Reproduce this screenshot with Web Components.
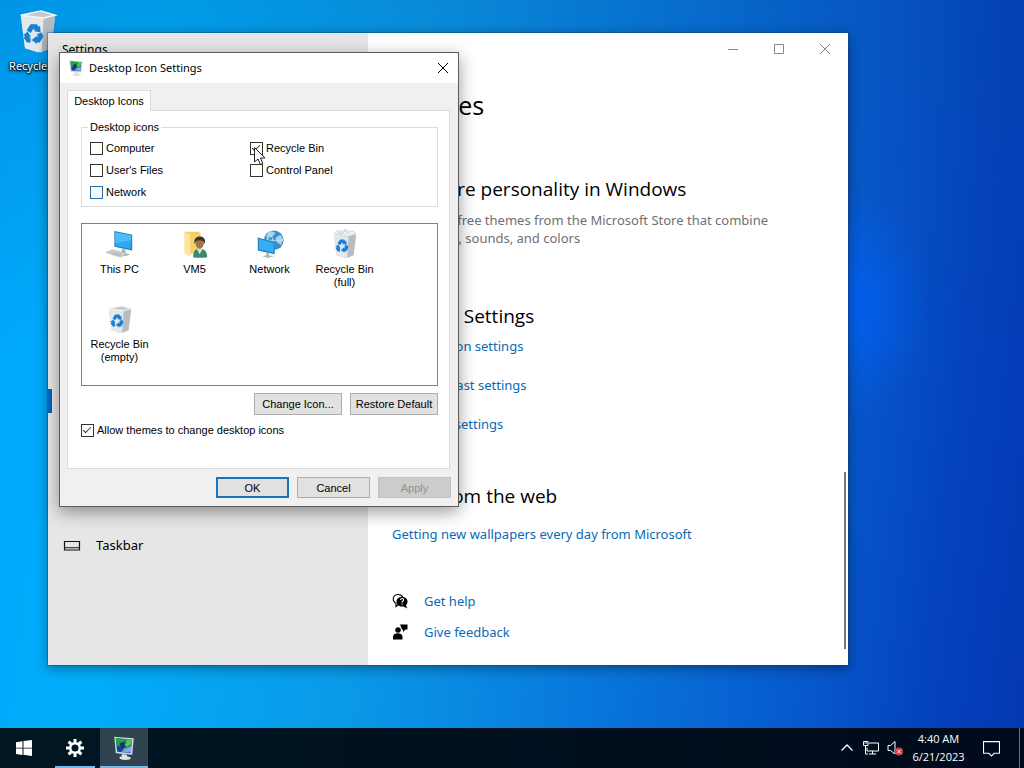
<!DOCTYPE html>
<html lang="en">
<head>
<meta charset="utf-8">
<title>Desktop</title>
<style>
  html, body { margin: 0; height: 100%; }
  body { font: 13px/20px "Noto Sans", "Open Sans", sans-serif; color: #000; overflow: hidden; }
  settings-window { position: absolute; left: 48px; top: 33px; }
  icon-dialog { position: absolute; left: 59px; top: 52px; }
  mouse-pointer { position: absolute; left: 253px; top: 146px; }
</style>
</head>
<body>
<desk-top>
  <desktop-shortcut>Recycle Bin</desktop-shortcut>
  <settings-window></settings-window>
  <icon-dialog></icon-dialog>
  <mouse-pointer></mouse-pointer>
  <task-bar slot="taskbar"></task-bar>
</desk-top>

<script>
const define = (name, html, setup) => {
  const template = document.createElement('template');
  template.innerHTML = html;
  customElements.define(name, class extends HTMLElement {
    constructor() {
      super();
      this.attachShadow({ mode: 'open' }).append(template.content.cloneNode(true));
    }
    connectedCallback() { if (setup) setup(this, this.shadowRoot); }
  });
};

/* ---------- pictures ---------- */
const recycle = `<g fill="none" stroke="#1a7fd0" stroke-width="3.4">
  <path d="M9.500 16.500l2.200-3.500h2.600l1.200 2M16.800 17.500l1 2.200-1.500 2.600h-2M10.800 22.300H9.200L7.400 19.500"/></g>
  <path d="M13.200 16.200l4.600.6-.4-4.600zM15.200 19.300v5.800l-3.600-2.800zM5.400 19.200l3.400-2.600 2.400 3.600z" fill="#1a7fd0"/>`;
const bin = full => `<path d="M4 5l14-3 10 3-3 23-9 3-9-3z" fill="#d9dee1"/>
  <path d="M4 5l16 2-1.600 24L7 28z" fill="#e3e8ec"/><path d="M20 7l8-2-3 23-6.600 3z" fill="#b5bdc2"/>
  <path d="M4 5l14-3 10 3-8 2z" fill="#c3cbcf" stroke="#f4f7f8" stroke-width="1"/>
  ${full ? '<path d="M5 5l3-4 4 2 5-3 4 3 4-1 2 3-7 3z" fill="#eef1f2" stroke="#b9c1c5" stroke-width=".6"/><path d="M9 4l4 1 3-3 4 3" fill="none" stroke="#aab3b8" stroke-width=".7"/>' : ''}${recycle}`;
const monitorBlue = `<path d="M10 2l19 4v17l-19-4z" fill="#1878bd"/><path d="M11 3.400l17 3.500v14.700l-17-3.500z" fill="#2fa8f2"/>
  <path d="M11 3.400l17 3.500v5l-17 3z" fill="#4fbcfa"/>`;
const pictures = {
  'bin-empty': bin(false),
  'bin-full': bin(true),
  pc: `${monitorBlue}<path d="M18 21l4 1v4l5 1-5 2-7-2 3-2z" fill="#aeb6bb"/>
    <path d="M1 25l7-3 15 4-6 4z" fill="#d7dadc" stroke="#a5abaf" stroke-width=".6"/><path d="M4 25l13 3.500M6 24l13 3.500M8 28l6-4M12 29l6-3.500" stroke="#9da3a7" stroke-width=".6"/>`,
  user: `<path d="M5 3h15l2 2v20l-12 2-5-2z" fill="#f5cf69"/><path d="M5 3l6 3v24l-6-4z" fill="#ffe59a"/>
    <path d="M14 30c0-6 2-9 7-9s8 3 8 9c-5 1-11 1-15 0z" fill="#3b8a6b"/><path d="M18 21l3 6 3-6z" fill="#d5e9df"/>
    <ellipse cx="21" cy="15" rx="4.500" ry="6" fill="#a8714c"/><path d="M15.500 16c-1-6 2-8 6-8s6 3 5 8c-1-3-3-4-5-4s-5 0-6 4z" fill="#3a332e"/>`,
  network: `<circle cx="20" cy="12" r="10.500" fill="#3c8fc4"/><path d="M12 6l5-4 5 2-3 4-4 1-2 5zM22 9l5-3 3 5-2 6-5-3z" fill="#9fd3ee"/>
    <path d="M14 3q8 8 6 19M10 12h20" stroke="#d2ecf8" stroke-width=".8" fill="none"/>
    <path d="M3 9l18 5v13L3 23z" fill="#1878bd"/><path d="M4 10.500l16 4.300v10.700L4 21.800z" fill="#38acf4"/>
    <path d="M12 25l3 1v2l5 1-6 2-6-2 4-1z" fill="#adb6bb"/>`,
  display: `<path d="M3 1l26 2-2 22-22-2z" fill="#cdd6df"/><path d="M5 3l21.500 1.500-1.500 18L7 21z" fill="#1c3f9c"/>
    <path d="M5 3l15 1-4 7-10 3z" fill="#23a442"/><path d="M20 4l6.500.5-.5 6L14 20z" fill="#4ac84f"/><path d="M12 20.500l14-8-.9 9.500z" fill="#86a9ec"/>
    <path d="M10 10l8-3-3 5 5 2-6 3z" fill="#172f78"/><path d="M13 24l7 1v2c8 1 6 5-2 5s-11-4-5-5z" fill="#dfe3e7"/>`,
  taskbar: `<path d="M1 7h30v17H1zM1 19.500h30" fill="none" stroke="#111" stroke-width="2.400"/>`,
  help: `<path d="M13 23l-5 4v-6C-2 14 3 3 12 3c5 0 8 2 10 6" fill="none" stroke="#000" stroke-width="2.200"/>
    <path d="M20 8c7 0 11 4 11 9 0 3-1 5-3 7l2 7-7-4c-9 1-14-4-14-10 0-5 4-9 11-9z"/>
    <path d="M17 14c0-4 7-4 6 0 0 2-3 2-3 5M20 21v2.500" fill="none" stroke="#fff" stroke-width="2.200"/>`,
  feedback: `<circle cx="12" cy="12" r="5.500"/><path d="M2 31V25c0-9 19-9 19 0v6z"/><path d="M16 1h15v10h-4l-5 5v-5h-2z"/>`,
  start: `<path d="M0 4.500l13-2v13H0zM15 2.200L32 0v15.500H15zM0 17h13v13L0 28zM15 17h17v15l-17-2.300z" fill="#fff"/>`,
  gear: `<g fill="none" stroke="#fff"><circle cx="16" cy="16" r="8.500" stroke-width="4.500"/>
    <path d="M16 0v7M16 25v7M0 16h7M25 16h7M4.700 4.700l5 5M22.300 22.300l5 5M4.700 27.300l5-5M22.300 9.700l5-5" stroke-width="5.500"/></g>`,
  chevron: `<path d="M5 21L16 10l11 11" fill="none" stroke="#fff" stroke-width="2.500"/>`,
  net: `<g fill="none" stroke="#fff" stroke-width="2"><path d="M11 6h20v16H8V15M19 22v6M12 28h14M1 3h9v8H1zM5 11v17h5"/><path d="M3 6h5" /></g>`,
  volume: `<path d="M2 11h5l9-8v25l-9-7H2z" fill="none" stroke="#fff" stroke-width="2"/>
    <circle cx="24" cy="23" r="8" fill="#d9393f"/><path d="M20.500 19.500l7 7M27.500 19.500l-7 7" stroke="#fff" stroke-width="2"/>`,
  note: `<path d="M1 3h30v22h-10l-5 5-5-5H1z" fill="none" stroke="#fff" stroke-width="2"/>`,
  min: `<path d="M6 17h20" stroke="#888" stroke-width="2" fill="none"/>`,
  max: `<path d="M7 7h18v18H7z" stroke="#888" stroke-width="2" fill="none"/>`,
  close: `<path d="M6 6l20 20M26 6L6 26" stroke="currentColor" stroke-width="2" fill="none"/>`
};
define('sys-icon', `<style>
  :host { display: block; flex: none; width: var(--size, 16px); height: var(--size, 16px); }
  svg { display: block; width: 100%; height: 100%; overflow: visible; }
</style><svg viewBox="0 0 32 32" aria-hidden="true"></svg>`,
(host, root) => { root.querySelector('svg').innerHTML = pictures[host.getAttribute('name')]; });

/* ---------- desktop ---------- */
define('desk-top', `<style>
  :host { display: grid; grid-template-rows: 1fr auto; min-height: 100vh; position: relative;
    background:
      radial-gradient(ellipse 80px 110px at 850px 305px, rgba(0,100,255,.7), transparent),
      linear-gradient(180deg, rgba(0,60,130,.16), transparent 45%),
      linear-gradient(97deg, #00a6fa 0%, #00aefb 14%, #0a9ae8 38%, #0878dc 60%, #0758cc 80%, #0444bd 90%, #0337b2 100%); }
  main { padding: 8px 0; }
</style><main><slot></slot></main><slot name="taskbar"></slot>`);

define('desktop-shortcut', `<style>
  :host { display: block; width: 76px; }
  a { display: flex; flex-direction: column; align-items: center; gap: 4px; color: #fff; text-decoration: none;
    font-size: 11px; line-height: 16px; text-shadow: 0 1px 2px #000, 0 0 2px #000, 0 1px 3px #000; }
  sys-icon { --size: 46px; }
</style><a href="#"><sys-icon name="bin-empty"></sys-icon><span><slot></slot></span></a>`);

define('mouse-pointer', `<style>
  :host { display: block; width: 14px; height: 20px; pointer-events: none; }
  svg { display: block; }
</style><svg width="14" height="20" viewBox="0 0 14 20" aria-hidden="true">
  <path d="M1.500 1.500v14.500l3.500-3 2.500 5.500 2.300-1-2.300-5.500h4.500z" fill="#fff" stroke="#222" stroke-width="1"/></svg>`);

/* ---------- settings window ---------- */
define('text-link', `<style>
  :host { display: block; line-height: 20px; }
  a { display: flex; width: fit-content; align-items: center; gap: 16px; color: #0a6ab6; text-decoration: none; white-space: nowrap; }
  ::slotted(sys-icon) { color: #000; }
</style><a href="#"><slot name="icon"></slot><span><slot></slot></span></a>`);

define('settings-window', `<style>
  :host { display: grid; grid-template-columns: 2fr 3fr; width: 800px; background: #fff;
    box-shadow: 0 0 0 1px rgba(20,60,100,.35), 0 3px 12px rgba(0,0,0,.4); }
  aside { background: #e6e6e6; }
  .title { padding: 7px 14px; font-size: 12px; line-height: 20px; }
  nav { padding-top: 322px; display: flex; flex-direction: column; gap: 120px; }
  nav a { display: flex; align-items: center; gap: 16px; color: #000; text-decoration: none; line-height: 25px; padding-left: 16px; }
  nav .current { height: 24px; padding-left: 0; border-left: 4px solid #0067c0; }
  section { position: relative; }
  .bar { display: flex; justify-content: flex-end; }
  .bar button { width: 46px; height: 32px; border: 0; padding: 0; background: none; display: grid; place-items: center; color: #888; }
  .content { padding: 24px 24px 23px; }
  h1, h2, p { margin: 0; font-weight: 400; white-space: nowrap; }
  h1, h2 { font-family: "Open Sans", "Noto Sans", sans-serif; }
  h1 { font-size: 25px; line-height: 32px; }
  h2 { font-size: 19px; line-height: 28px; }
  p { margin-top: 8px; line-height: 18px; color: #707070; }
  .get { margin-top: 54px; }
  .related { margin-top: 55px; margin-bottom: 6px; }
  .links { display: grid; gap: 19px; }
  .web { margin: 48px 0 14px; }
  .support { display: grid; gap: 11px; margin-top: 47px; }
  .thumb { position: absolute; right: 2px; bottom: 16px; width: 2px; height: 177px; background: #777; }
</style>
<aside>
  <div class="title">Settings</div>
  <nav><a class="current" href="#" aria-label="Themes"></a>
    <a href="#"><sys-icon name="taskbar"></sys-icon>Taskbar</a></nav>
</aside>
<section>
  <div class="bar">
    <button aria-label="Minimize"><sys-icon name="min"></sys-icon></button>
    <button aria-label="Maximize"><sys-icon name="max"></sys-icon></button>
    <button aria-label="Close"><sys-icon name="close"></sys-icon></button>
  </div>
  <div class="content">
    <h1>Themes</h1>
    <h2 class="get">Get more personality in Windows</h2>
    <p>Download free themes from the Microsoft Store that combine<br>wallpapers, sounds, and colors</p>
    <h2 class="related">Related Settings</h2>
    <div class="links">
      <text-link>Desktop icon settings</text-link>
      <text-link>High contrast settings</text-link>
      <text-link>Sync your settings</text-link>
    </div>
    <h2 class="web">Help from the web</h2>
    <text-link>Getting new wallpapers every day from Microsoft</text-link>
    <div class="support">
      <text-link><sys-icon slot="icon" name="help"></sys-icon>Get help</text-link>
      <text-link><sys-icon slot="icon" name="feedback"></sys-icon>Give feedback</text-link>
    </div>
  </div>
  <div class="thumb"></div>
</section>`);

/* ---------- dialog ---------- */
define('check-field', `<style>
  :host { display: block; }
  label { display: flex; width: fit-content; align-items: center; gap: 3px; line-height: 14px; white-space: nowrap; }
  input { box-sizing: border-box; appearance: none; margin: 0; width: 13px; height: 13px; border: 1px solid #333; background: #fff; }
  input:checked::after { content: ""; display: block; width: 7px; height: 3px; margin: 2px 1px; border: solid #333; border-width: 0 0 1px 1px; transform: rotate(-45deg); }
  :host([hot]) input { border-color: #2a6ea8; background: #f4fbff; }
</style><label><input type="checkbox"><span><slot></slot></span></label>`,
(host, root) => { root.querySelector('input').checked = host.hasAttribute('checked'); });

define('push-button', `<style>
  :host { display: block; width: 73px; }
  button { display: block; width: 100%; height: var(--height, 21px); padding: 0; border: 1px solid #adadad; background: #e1e1e1; color: #000; font: inherit; white-space: nowrap; }
  :host([primary]) button { border: 2px solid #1874bd; }
  button:disabled { color: #919191; background: #ccc; border-color: #c2c2c2; }
</style><button type="button"><slot></slot></button>`,
(host, root) => { root.querySelector('button').disabled = host.hasAttribute('disabled'); });

define('icon-tile', `<style>
  :host { display: flex; flex-direction: column; align-items: center; text-align: center; gap: 4px; line-height: 13px; }
  sys-icon { --size: 30px; }
</style><sys-icon></sys-icon><span><slot></slot></span>`,
(host, root) => {
  const icon = document.createElement('sys-icon');
  icon.setAttribute('name', host.getAttribute('picture'));
  root.querySelector('sys-icon').replaceWith(icon);
});

define('icon-dialog', `<style>
  :host { display: block; box-sizing: border-box; width: 400px; border: 1px solid #5c5c5c; background: #f0f0f0;
    font: 11px/14px "Liberation Sans", Arial, sans-serif; box-shadow: 0 5px 16px rgba(0,0,0,.4); }
  header { display: flex; align-items: center; gap: 5px; height: 30px; padding-left: 8px; background: #fff;
    font: 11px/20px "Noto Sans", "Open Sans", sans-serif; }
  header span { flex: 1; }
  header button { width: 30px; height: 30px; border: 0; padding: 0; background: none; color: #000; display: grid; place-items: center; }
  .body { padding: 7px 7px 8px; }
  .tab { display: block; width: 84px; height: 21px; margin-bottom: -1px; padding: 0; position: relative; border: 1px solid #dcdcdc; border-bottom: 0; background: #fff; color: #000; font: inherit; }
  .panel { border: 1px solid #dcdcdc; background: #fff; padding: 9px 11px 31px 13px; margin-right: 1px; }
  fieldset { min-width: 0; margin: 0; padding: 7px 8px; border: 1px solid #dcdcdc; }
  legend { padding: 0 2px; margin-left: -2px; line-height: 14px; }
  .checks { display: grid; grid-template-columns: 160px 1fr; row-gap: 8px; }
  .list { display: grid; grid-template-columns: repeat(4, 75px); grid-auto-rows: 75px; margin-top: 16px; padding: 5px 0 6px; border: 1px solid #828282; }
  .actions { display: flex; justify-content: flex-end; gap: 8px; margin: 7px 0 8px; }
  .actions push-button { width: 88px; --height: 22px; }
  footer { display: flex; justify-content: flex-end; gap: 8px; margin-top: 8px; }
</style>
<header><sys-icon name="display"></sys-icon><span>Desktop Icon Settings</span>
  <button aria-label="Close"><sys-icon name="close"></sys-icon></button></header>
<div class="body">
  <button class="tab" type="button" role="tab" aria-selected="true">Desktop Icons</button>
  <div class="panel">
    <fieldset><legend>Desktop icons</legend>
      <div class="checks">
        <check-field>Computer</check-field><check-field checked>Recycle Bin</check-field>
        <check-field>User's Files</check-field><check-field>Control Panel</check-field>
        <check-field hot>Network</check-field>
      </div>
    </fieldset>
    <div class="list">
      <icon-tile picture="pc">This PC</icon-tile>
      <icon-tile picture="user">VM5</icon-tile>
      <icon-tile picture="network">Network</icon-tile>
      <icon-tile picture="bin-full">Recycle Bin<br>(full)</icon-tile>
      <icon-tile picture="bin-empty">Recycle Bin<br>(empty)</icon-tile>
    </div>
    <div class="actions"><push-button>Change Icon...</push-button><push-button>Restore Default</push-button></div>
    <check-field checked>Allow themes to change desktop icons</check-field>
  </div>
  <footer><push-button primary>OK</push-button><push-button>Cancel</push-button><push-button disabled>Apply</push-button></footer>
</div>`);

/* ---------- taskbar ---------- */
define('task-bar', `<style>
  :host { display: flex; height: 40px; background: linear-gradient(90deg, #001722, #00101f 50%, #000a1c); color: #fff;
    font-family: "Open Sans", "Noto Sans", sans-serif; font-size: 11px; line-height: 18px; }
  button { box-sizing: border-box; border: 0; padding: 0; background: none; color: inherit; font: inherit; display: grid; place-items: center; }
  .app { width: 48px; height: 40px; }
  .gear { --size: 18px; }
  .apps { display: flex; gap: 1px; margin-left: 3px; flex: 1; }
  .open { background: linear-gradient(#76b9ed, #76b9ed) center bottom / 40px 2px no-repeat; }
  .active { background: linear-gradient(#76b9ed, #76b9ed) center bottom / 48px 2px no-repeat #2f4450; }
  .active sys-icon { --size: 24px; }
  .tray { display: flex; align-items: center; }
  .tray button { width: 24px; height: 40px; }
  .tray .clock { width: 63px; text-align: center; }
  .tray .note { width: 42px; --size: 17px; margin-right: 7px; }
  .peek { width: 4px; height: 40px; border-left: 1px solid #66727f; }
</style>
<button class="app" aria-label="Start"><sys-icon name="start"></sys-icon></button>
<div class="apps">
  <button class="app open" aria-label="Settings"><sys-icon class="gear" name="gear"></sys-icon></button>
  <button class="app active" aria-label="Desktop Icon Settings"><sys-icon name="display"></sys-icon></button>
</div>
<div class="tray">
  <button aria-label="Show hidden icons"><sys-icon name="chevron"></sys-icon></button>
  <button aria-label="Network"><sys-icon name="net"></sys-icon></button>
  <button aria-label="Volume"><sys-icon name="volume"></sys-icon></button>
  <button class="clock"><span>4:40 AM<br>6/21/2023</span></button>
  <button class="note" aria-label="Notifications"><sys-icon name="note"></sys-icon></button>
  <div class="peek"></div>
</div>`);
</script>
</body>
</html>
